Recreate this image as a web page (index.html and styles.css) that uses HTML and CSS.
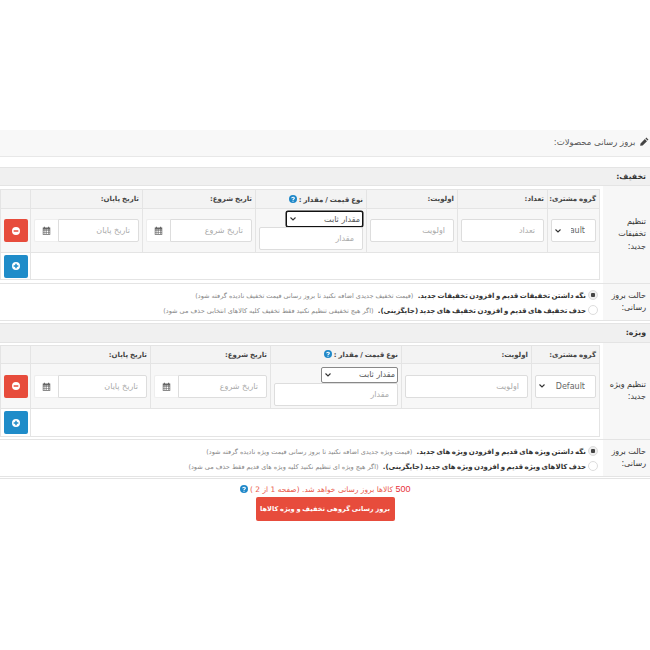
FILE: index.html
```html
<!DOCTYPE html>
<html dir="rtl" lang="fa">
<head>
<meta charset="UTF-8">
<title>بروز رسانی محصولات</title>
<link rel="stylesheet" href="styles.css">
</head>
<body>
<svg class="defs" width="0" height="0">
<symbol id="cal" viewBox="0 0 12 12"><path fill="#666" d="M1 2h1.500V1h1.500v1h4V1h1.500v1H11v9.500H1zM2 4.500v1.500h1.500V4.500zm2.300 0v1.500h1.500V4.500zm2.200 0v1.500H8V4.500zm2.300 0v1.500H10V4.500zM2 6.800v1.500h1.500V6.800zm2.300 0v1.500h1.500V6.800zm2.200 0v1.500H8V6.800zm2.300 0v1.500H10V6.800zM2 9v1.500h1.500V9zm2.300 0v1.500h1.500V9zm2.200 0v1.500H8V9zm2.300 0v1.500H10V9z"/></symbol>
<symbol id="minus" viewBox="0 0 12 12"><path fill="#fff" fill-rule="evenodd" d="M6 0a6 6 0 1 0 0 12A6 6 0 0 0 6 0zM2.500 4.800h7v2.400h-7z"/></symbol>
<symbol id="plus" viewBox="0 0 12 12"><path fill="#fff" fill-rule="evenodd" d="M6 0a6 6 0 1 0 0 12A6 6 0 0 0 6 0zM4.900 2.500h2.200v2.400h2.400v2.200H7.100v2.400H4.900V7.100H2.500V4.900h2.400z"/></symbol>
<symbol id="help" viewBox="0 0 12 12"><circle cx="6" cy="6" r="6" fill="#1f88c9"/><path fill="none" stroke="#fff" stroke-width="1.600" d="M4 4.800C4 2.800 8 2.800 8 4.700 8 6 6 6 6 7.600"/><rect x="5.200" y="8.500" width="1.600" height="1.600" fill="#fff"/></symbol>
</svg>

<div class="page-title">
  <svg class="pencil" viewBox="0 0 12 12" width="9" height="9"><path fill="#444" d="M8.500.7l2.800 2.800-1.300 1.300-2.800-2.800zM6.500 2.700l2.800 2.800L3.500 11.300.2 11.800.7 8.500z"/></svg>
  بروز رسانی محصولات:
</div>

<div class="band band-first">تخفیف:</div>
<table class="form-row">
  <tr>
    <th class="side side-big">تنظیم تخفیفات جدید:</th>
    <td class="holder">
      <table class="grid">
        <colgroup><col class="c52"><col class="c90"><col class="c91"><col class="c111"><col class="c113"><col class="c112"><col class="c30"></colgroup>
        <tr class="head">
          <th>گروه مشتری:</th>
          <th>تعداد:</th>
          <th>اولویت:</th>
          <th>نوع قیمت / مقدار : <svg class="ic-help"><use href="#help"/></svg></th>
          <th>تاریخ شروع:</th>
          <th>تاریخ پایان:</th>
          <th></th>
        </tr>
        <tr class="body">
          <td><select class="sel narrow"><option>Default</option></select></td>
          <td><input class="inp" placeholder="تعداد"></td>
          <td><input class="inp" placeholder="اولویت"></td>
          <td class="stack">
            <select class="type focused"><option>مقدار ثابت</option></select>
            <input class="inp" placeholder="مقدار">
          </td>
          <td><div class="date"><input class="inp" placeholder="تاریخ شروع"><span class="addon"><svg><use href="#cal"/></svg></span></div></td>
          <td><div class="date"><input class="inp" placeholder="تاریخ پایان"><span class="addon"><svg><use href="#cal"/></svg></span></div></td>
          <td class="btn-cell"><span class="btn red"><svg><use href="#minus"/></svg></span></td>
        </tr>
        <tr class="foot">
          <td colspan="6"></td>
          <td class="btn-cell"><span class="btn blue"><svg><use href="#plus"/></svg></span></td>
        </tr>
      </table>
    </td>
  </tr>
  <tr>
    <th class="side">حالت بروز رسانی:</th>
    <td class="modes">
      <label><input type="radio" name="m1" checked><b>نگه داشتن تخفیفات قدیم و افزودن تخفیفات جدید.</b> <small>(قیمت تخفیف جدیدی اضافه نکنید تا بروز رسانی قیمت تخفیف نادیده گرفته شود)</small></label>
      <label><input type="radio" name="m1"><b>حذف تخفیف های قدیم و افزودن تخفیف های جدید (جایگزینی).</b> <small>(اگر هیچ تخفیفی تنظیم نکنید فقط تخفیف کلیه کالاهای انتخابی حذف می شود)</small></label>
    </td>
  </tr>
</table>

<div class="band band-second">ویژه:</div>
<table class="form-row second">
  <tr>
    <th class="side side-big">تنظیم ویژه جدید:</th>
    <td class="holder">
      <table class="grid">
        <colgroup><col class="c68"><col class="c130"><col class="c131"><col class="c120"><col class="c120"><col class="c30"></colgroup>
        <tr class="head">
          <th>گروه مشتری:</th>
          <th>اولویت:</th>
          <th>نوع قیمت / مقدار : <svg class="ic-help"><use href="#help"/></svg></th>
          <th>تاریخ شروع:</th>
          <th>تاریخ پایان:</th>
          <th></th>
        </tr>
        <tr class="body">
          <td><select class="sel"><option>Default</option></select></td>
          <td><input class="inp" placeholder="اولویت"></td>
          <td class="stack">
            <select class="type"><option>مقدار ثابت</option></select>
            <input class="inp" placeholder="مقدار">
          </td>
          <td><div class="date"><input class="inp" placeholder="تاریخ شروع"><span class="addon"><svg><use href="#cal"/></svg></span></div></td>
          <td><div class="date"><input class="inp" placeholder="تاریخ پایان"><span class="addon"><svg><use href="#cal"/></svg></span></div></td>
          <td class="btn-cell"><span class="btn red"><svg><use href="#minus"/></svg></span></td>
        </tr>
        <tr class="foot">
          <td colspan="5"></td>
          <td class="btn-cell"><span class="btn blue"><svg><use href="#plus"/></svg></span></td>
        </tr>
      </table>
    </td>
  </tr>
  <tr>
    <th class="side">حالت بروز رسانی:</th>
    <td class="modes">
      <label><input type="radio" name="m2" checked><b>نگه داشتن ویژه های قدیم و افزودن ویژه های جدید.</b> <small>(قیمت ویژه جدیدی اضافه نکنید تا بروز رسانی قیمت ویژه نادیده گرفته شود)</small></label>
      <label><input type="radio" name="m2"><b>حذف کالاهای ویژه قدیم و افزودن ویژه های جدید (جایگزینی).</b> <small>(اگر هیچ ویژه ای تنظیم نکنید کلیه ویژه های قدیم فقط حذف می شود)</small></label>
    </td>
  </tr>
</table>

<div class="submit-area">
  <div class="count"><span class="num">500</span> کالاها بروز رسانی خواهد شد. (صفحه 1 از 2 ) <svg class="ic-help"><use href="#help"/></svg></div>
  <button class="submit">بروز رسانی گروهی تخفیف و ویژه کالاها</button>
</div>
</body>
</html>
```
FILE: styles.css
```css
body{margin:0;padding-top:130px;background:#fff;font-family:"DejaVu Sans",sans-serif;font-size:8px;color:#333;}
.defs{position:absolute;}
.page-title{height:27px;line-height:25px;background:#f8f8f8;border-bottom:1px solid #e8e8e8;padding-right:1px;color:#555;box-sizing:border-box;font-size:8.500px;}
.pencil{margin-left:2px;vertical-align:-1px;}
.band{height:19px;line-height:17px;background:#f0f0f0;border:1px solid #e4e4e4;border-width:1px 0;box-sizing:border-box;padding-right:4px;font-weight:bold;font-size:7.800px;}
.band-first{margin-top:10px;}
.band-second{height:20px;line-height:18px;margin-top:2px;}
.form-row{width:650px;border-collapse:collapse;table-layout:fixed;}
.form-row>tbody>tr>td,.form-row>tbody>tr>th{padding:0;border-bottom:1px solid #e4e4e4;}
.side{width:47px;background:#f7f7f7;text-align:right;vertical-align:middle;font-weight:normal;font-size:8px;line-height:12.500px;padding:0 4px !important;box-sizing:border-box;color:#333;}
.form-row .side{width:47px;}
.holder{padding:3px 3px 3px 1px !important;}
.second .holder{padding-top:2px !important;padding-bottom:2px !important;}
.grid{width:599px;border-collapse:collapse;table-layout:fixed;border:1px solid #e4e4e4;}
.grid td,.grid th{border:1px solid #e4e4e4;padding:0 3px;box-sizing:border-box;}
.head th{height:19px;background:#f3f3f3;text-align:right;font-size:7px;word-spacing:-.5px;color:#444;white-space:nowrap;overflow:hidden;}
.second .head th{height:18px;}
.body td{height:44px;background:#f7f7f7;vertical-align:middle;}
.second .body td{height:45px;}
.foot td{height:27px;background:#fff;}
.second .foot td{height:28px;}
.grid .btn-cell{padding:0;text-align:center;vertical-align:middle;}
.c52{width:52px;}.c90{width:90px;}.c91{width:91px;}.c111{width:111px;}.c113{width:113px;}.c112{width:112px;}.c30{width:30px;}
.c68{width:68px;}.c130{width:130px;}.c131{width:131px;}.c120{width:120px;}
.inp{display:block;width:100%;height:23px;box-sizing:border-box;border:1px solid #ddd;border-radius:2px;background:#fff;padding:0 8px;font:8px "DejaVu Sans",sans-serif;text-align:right;direction:rtl;}
.inp::placeholder{color:#aaa;}
.sel,.type{appearance:none;background:#fff url("data:image/svg+xml,%3Csvg xmlns='http://www.w3.org/2000/svg' viewBox='0 0 6 4'%3E%3Cpath d='M.5.500L3 3 5.500.5' fill='none' stroke='%23333' stroke-width='1.100'/%3E%3C/svg%3E") no-repeat 3px center/6px 4px;}
.sel{width:100%;height:23px;box-sizing:border-box;border:1px solid #ddd;border-radius:2px;font:8px "DejaVu Sans",sans-serif;color:#666;padding:0 10px 0 14px;}
.sel.narrow{padding-left:19px;}
.stack .type{display:block;width:77px;height:16px;margin:0 0 0 auto;box-sizing:border-box;border:1px solid #888;border-radius:2px;font:8px "DejaVu Sans",sans-serif;color:#555;padding:0 2px 0 12px;}
.stack .type.focused{border-color:#111;box-shadow:0 0 0 .5px #111;}
.date{display:flex;}
.date .inp{flex:1;min-width:0;border-radius:0 2px 2px 0;}
.addon{flex:none;width:24px;height:23px;box-sizing:border-box;border:1px solid #eee;border-right:0;border-radius:2px 0 0 2px;background:#fff;display:flex;align-items:center;justify-content:center;}
.addon svg{width:9px;height:9px;}
.btn{display:inline-flex;width:24px;height:23px;border-radius:2px;align-items:center;justify-content:center;vertical-align:middle;}
.btn svg{width:8px;height:8px;}
.red{background:#e74c3c;}
.blue{background:#1f8cc9;}
.modes{padding:5px 5px 1px 0 !important;height:36px;box-sizing:border-box;}
.modes label{display:block;height:15px;line-height:15px;white-space:nowrap;font-size:7px;word-spacing:-1px;color:#333;}
.modes input{appearance:none;width:10px;height:10px;margin:0 0 0 2px;vertical-align:-2px;border:1px solid #ddd;border-radius:50%;background:#fff;}
.modes input:checked{background:radial-gradient(circle,#444 0 2px,#eee 2.500px);}
.modes small{font-size:6.500px;word-spacing:0;font-weight:normal;color:#888;margin-right:3px;}
.submit-area{text-align:center;padding-top:5px;border-top:1px solid #e4e4e4;margin-top:1px;}
.count{color:#ea5a4c;font-size:7.500px;line-height:10px;}
.count .num{font:9px "Liberation Sans",sans-serif;color:#e8303a;}
.ic-help{width:8px;height:8px;vertical-align:-1px;}
.submit{display:block;margin:2px auto 0;width:139px;height:24px;padding:0;white-space:nowrap;border:0;border-radius:2px;background:#e74c3c;color:#fff;font:bold 6.600px "DejaVu Sans",sans-serif;word-spacing:-.5px;}
```
